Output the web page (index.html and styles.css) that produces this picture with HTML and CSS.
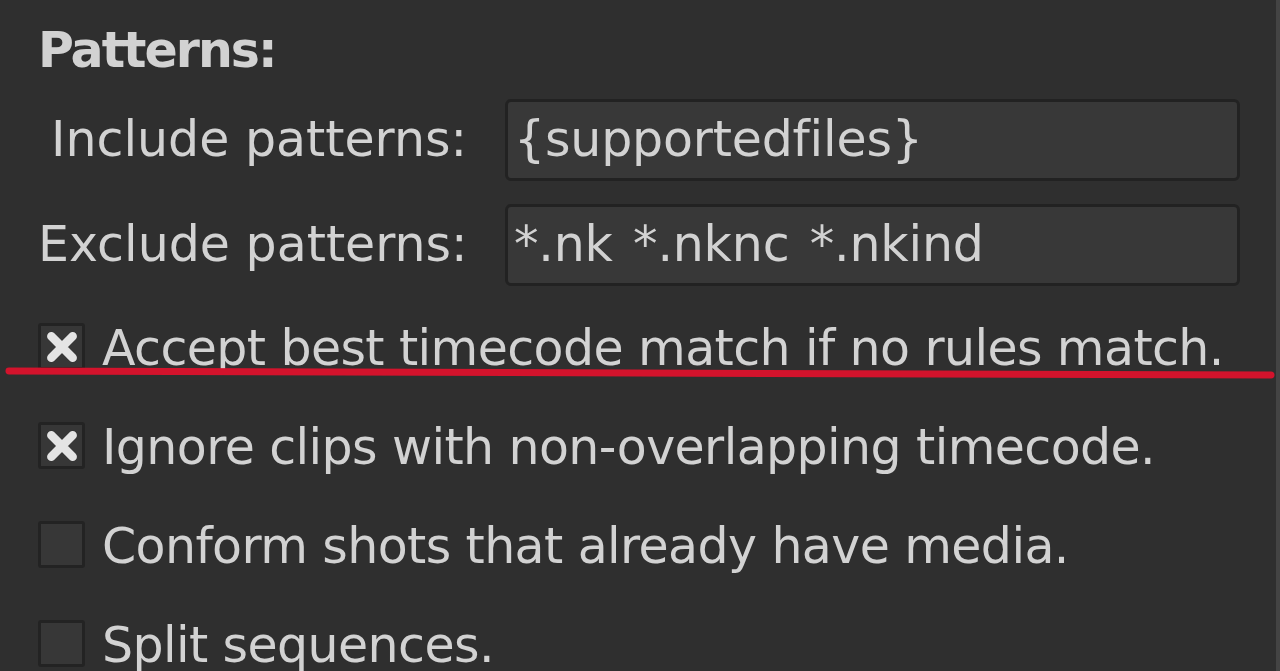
FILE: index.html
```html
<!DOCTYPE html>
<html lang="en">

<head>
    <meta charset="UTF-8">
    <meta name="viewport" content="width=device-width, initial-scale=1.0">
    <title>Conform options</title>
    <link rel="stylesheet" href="styles.css">
</head>

<body>
    <div class="panel">
        <h2 class="section-title">Patterns:</h2>

        <div class="form">
            <label class="field-label">Include patterns:</label>
            <div class="field">{supportedfiles}</div>
            <label class="field-label">Exclude patterns:</label>
            <div class="field">*.nk *.nknc *.nkind</div>
        </div>

        <ul class="options">
            <li class="option">
                <span class="check checked">
                    <svg viewBox="0 0 30 28"><path d="M5 4 L25 24 M25 4 L5 24" /></svg>
                </span>
                Accept best timecode match if no rules match.
            </li>
            <li class="option">
                <span class="check checked">
                    <svg viewBox="0 0 30 28"><path d="M5 4 L25 24 M25 4 L5 24" /></svg>
                </span>
                Ignore clips with non-overlapping timecode.
            </li>
            <li class="option">
                <span class="check"></span>
                Conform shots that already have media.
            </li>
            <li class="option">
                <span class="check"></span>
                Split sequences.
            </li>
        </ul>

        <!-- hand drawn underline over the first option -->
        <svg class="markup" viewBox="0 0 1280 671" width="1280" height="671">
            <path d="M9 371 C 300 372, 700 375, 1271 375" />
        </svg>
    </div>
</body>

</html>
```

FILE: styles.css
```css
* {
    padding: 0;
    margin: 0;
    box-sizing: border-box;
}

html,
body {
    height: 100%;
    overflow: hidden;
}

body {
    background: #2f2f2f;
    color: #d2d2d2;
    font-family: "DejaVu Sans", Verdana, sans-serif;
    font-size: 49px;
    letter-spacing: -0.6px;
}

.panel {
    position: relative;
    height: 100%;
    padding: 21px 0 0 38px;
    border-right: 4px solid #444;
}

.section-title {
    font-size: 49px;
    font-weight: bold;
    line-height: 60px;
    letter-spacing: -2px;
}

.form {
    display: grid;
    grid-template-columns: 429px 735px;
    column-gap: 38px;
    row-gap: 23px;
    margin-top: 18px;
    align-items: center;
}

.field-label {
    text-align: right;
    line-height: 60px;
    letter-spacing: 0;
    white-space: nowrap;
}

.field {
    height: 82px;
    padding-left: 6px;
    line-height: 76px;
    letter-spacing: -0.2px;
    word-spacing: 5px;
    background: #383838;
    border: 3px solid #222;
    border-radius: 6px;
    white-space: nowrap;
}

.options {
    list-style: none;
    margin-top: 37px;
    display: flex;
    flex-direction: column;
    gap: 52px;
}

.option {
    display: flex;
    align-items: center;
    height: 47px;
    gap: 17px;
    padding-top: 3px;
    white-space: nowrap;
}

.check {
    flex: none;
    width: 47px;
    height: 47px;
    margin-top: -3px;
    display: flex;
    align-items: center;
    justify-content: center;
    background: #373737;
    border: 3px solid #232323;
    border-radius: 3px;
}

.check svg {
    width: 32px;
    height: 30px;
}

.check svg path {
    stroke: #e4e4e4;
    stroke-width: 8;
    stroke-linecap: round;
    fill: none;
}

.markup {
    position: absolute;
    left: 0;
    top: 0;
    pointer-events: none;
}

.markup path {
    fill: none;
    stroke: #d3132c;
    stroke-width: 7;
    stroke-linecap: round;
}
```
